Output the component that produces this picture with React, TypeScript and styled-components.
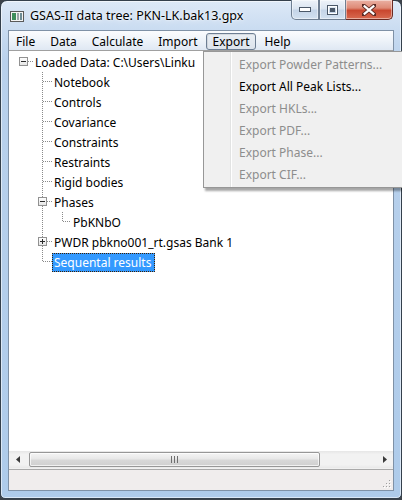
import React from 'react';
import styled, { createGlobalStyle } from 'styled-components';

const Global = createGlobalStyle`
  html, body { margin: 0; padding: 0; background: #3d434a; }
  body { width: 402px; height: 500px; overflow: hidden; font-family: "Segoe UI", "Noto Sans", "DejaVu Sans", sans-serif; }
`;

const Window = styled.div`
  position: relative;
  width: 402px;
  height: 499px;
  box-sizing: border-box;
  border: 1px solid #34404c;
  border-radius: 7px 7px 5px 5px;
  background: linear-gradient(180deg, #dde9f7 0px, #cadcf1 28px, #b9d1ec 60px, #aecbea 100%);
  box-shadow: inset 0 0 0 1px rgba(255, 255, 255, 0.55);
  display: flex;
  flex-direction: column;
`;

const TitleBar = styled.div`
  height: 29px;
  display: flex;
  align-items: center;
  flex: none;
`;

const AppIcon = styled.svg`
  margin-left: 9px;
  margin-top: 1px;
  flex: none;
`;

const Title = styled.span`
  margin-left: 6px;
  font-size: 12.5px;
  color: #000;
  text-shadow: 0 0 6px rgba(255, 255, 255, 0.9), 0 0 2px #fff;
`;

const Caption = styled.div`
  margin-left: auto;
  margin-right: 8px;
  align-self: flex-start;
  margin-top: -1px;
  display: flex;
`;

const CapButton = styled.div<{ $w: number; $close?: boolean }>`
  width: ${p => p.$w}px;
  height: 20px;
  box-sizing: border-box;
  border: 1px solid ${p => (p.$close ? '#6b2a22' : '#6f7f92')};
  border-left-width: ${p => (p.$close ? 0 : 1)}px;
  border-top: none;
  background: ${p =>
    p.$close
      ? 'linear-gradient(180deg, #eab1a4 0%, #de8a76 42%, #c9472f 55%, #d86a50 100%)'
      : 'linear-gradient(180deg, #eef3f9 0%, #dbe5f1 45%, #c5d5e8 55%, #d3e1f0 100%)'};
  border-radius: ${p => (p.$close ? '0 0 5px 0' : '0')};
  display: flex;
  align-items: center;
  justify-content: center;
  box-shadow: inset 0 0 0 1px rgba(255, 255, 255, 0.45);
  &:first-child { border-radius: 0 0 0 5px; }
`;

const Client = styled.div`
  flex: 1;
  margin: 0 7px 7px 7px;
  border: 1px solid #7f91a6;
  background: #f0f0f0;
  display: flex;
  flex-direction: column;
  min-height: 0;
`;

const MenuBar = styled.div`
  height: 19px;
  flex: none;
  display: flex;
  gap: 1px;
  align-items: stretch;
  background: linear-gradient(180deg, #fbfcfe 0%, #eef3f9 50%, #dfe8f3 100%);
`;

const MenuItem = styled.div<{ $open?: boolean }>`
  font-size: 12px;
  line-height: 17px;
  color: #000;
  box-sizing: border-box;
  margin-top: 2px;
  height: 17px;
  border: 1px solid ${p => (p.$open ? '#6d7e93' : 'transparent')};
  border-radius: 3px;
  background: ${p => (p.$open ? 'linear-gradient(180deg, #e9eef4 0%, #dde4ec 100%)' : 'transparent')};
  box-shadow: ${p => (p.$open ? 'inset 1px 1px 0 rgba(0,0,0,0.08)' : 'none')};
  display: flex;
  align-items: center;
  padding: 0 6px;
`;

const TreeArea = styled.div`
  flex: 1;
  background: #fff;
  border-top: 1px solid #a0a0a0;
  padding-top: 1px;
  overflow: hidden;
  min-height: 0;
`;

const Row = styled.div`
  height: 20px;
  display: flex;
  align-items: center;
`;

const Gutter = styled.svg`
  flex: none;
  display: block;
`;

const Label = styled.span<{ $sel?: boolean }>`
  font-size: 12px;
  line-height: 17px;
  height: 19px;
  box-sizing: border-box;
  padding: 0 3px 0 1px;
  white-space: nowrap;
  border: 1px dotted ${p => (p.$sel ? '#402000' : 'transparent')};
  background: ${p => (p.$sel ? '#3399ff' : 'transparent')};
  color: ${p => (p.$sel ? '#fff' : '#000')};
`;

const HScroll = styled.div`
  height: 17px;
  flex: none;
  display: flex;
  align-items: stretch;
  background: linear-gradient(180deg, #e6e6e6 0%, #f2f2f2 20%, #f2f2f2 80%, #e9e9e9 100%);
`;

const ArrowBtn = styled.div`
  width: 17px;
  flex: none;
  display: flex;
  align-items: center;
  justify-content: center;
`;

const Thumb = styled.div`
  margin: 1px 0 0 3px;
  height: 15px;
  width: 291px;
  box-sizing: border-box;
  border: 1px solid #979797;
  border-radius: 2px;
  background: linear-gradient(180deg, #f5f5f5 0%, #e8e8e8 45%, #d8d8d8 55%, #cfcfcf 100%);
  box-shadow: inset 0 0 0 1px rgba(255, 255, 255, 0.7);
  display: flex;
  align-items: center;
  justify-content: center;
`;

const Track = styled.div`
  flex: 1;
`;

const StatusBar = styled.div`
  margin-top: 1px;
  height: 21px;
  flex: none;
  box-sizing: border-box;
  border-top: 1px solid #a9a9a9;
  background: #f0eded;
  display: flex;
  justify-content: flex-end;
  align-items: flex-end;
  padding: 0 1px 1px 0;
`;

const Dropdown = styled.div`
  position: absolute;
  left: 202px;
  top: 50px;
  width: 200px;
  box-sizing: border-box;
  border: 1px solid #979797;
  padding: 2px 2px 1px 2px;
  background:
    linear-gradient(90deg, transparent 26px, #e2e3e3 26px, #e2e3e3 27px, #ffffff 27px, #ffffff 28px, transparent 28px),
    #f0f0f0;
  box-shadow: 2px 3px 2px rgba(0, 0, 0, 0.35);
`;

const DropItem = styled.div<{ $disabled?: boolean }>`
  height: 22px;
  line-height: 22px;
  padding-left: 33px;
  font-size: 12px;
  white-space: nowrap;
  color: ${p => (p.$disabled ? '#8d8d8d' : '#000')};
`;

type TreeRow = { label: string; level: 0 | 1 | 2; box?: 'minus' | 'plus'; last?: boolean; selected?: boolean };

const rows: TreeRow[] = [
  { label: 'Loaded Data: C:\\Users\\Linku', level: 0, box: 'minus' },
  { label: 'Notebook', level: 1 },
  { label: 'Controls', level: 1 },
  { label: 'Covariance', level: 1 },
  { label: 'Constraints', level: 1 },
  { label: 'Restraints', level: 1 },
  { label: 'Rigid bodies', level: 1 },
  { label: 'Phases', level: 1, box: 'minus' },
  { label: 'PbKNbO', level: 2, last: true },
  { label: 'PWDR pbkno001_rt.gsas Bank 1', level: 1, box: 'plus' },
  { label: 'Sequental results', level: 1, last: true, selected: true },
];

const DOT = '#8a8a8a';

const VLine = ({ x, y1, y2 }: { x: number; y1: number; y2: number }) => (
  <line x1={x + 0.5} x2={x + 0.5} y1={y1} y2={y2} stroke={DOT} strokeDasharray="1 1" shapeRendering="crispEdges" />
);
const HLine = ({ x1, x2, y }: { x1: number; x2: number; y: number }) => (
  <line x1={x1} x2={x2} y1={y + 0.5} y2={y + 0.5} stroke={DOT} strokeDasharray="1 1" shapeRendering="crispEdges" />
);
const ExpandBox = ({ cx, kind }: { cx: number; kind: 'minus' | 'plus' }) => (
  <g shapeRendering="crispEdges">
    <rect x={cx - 4 + 0.5} y={5.5} width={8} height={8} fill="url(#boxfill)" stroke="#919191" />
    <line x1={cx - 2} x2={cx + 3} y1={9.5} y2={9.5} stroke="#2b2b2b" />
    {kind === 'plus' && <line x1={cx + 0.5} x2={cx + 0.5} y1={7} y2={12} stroke="#2b2b2b" />}
  </g>
);

const Connector = ({ row }: { row: TreeRow }) => {
  const widths = { 0: 24, 1: 43, 2: 62 } as const;
  const w = widths[row.level];
  return (
    <Gutter width={w} height={20} viewBox={`0 0 ${w} 20`}>
      <defs>
        <linearGradient id="boxfill" x1="0" y1="0" x2="0" y2="1">
          <stop offset="0" stopColor="#ffffff" />
          <stop offset="1" stopColor="#e4e4e4" />
        </linearGradient>
      </defs>
      {row.level === 0 && (
        <>
          <ExpandBox cx={14} kind={row.box || 'minus'} />
          <HLine x1={19} x2={24} y={9} />
        </>
      )}
      {row.level === 1 && (
        <>
          {row.box ? (
            <>
              <VLine x={33} y1={0} y2={5} />
              {!row.last && <VLine x={33} y1={14} y2={20} />}
              <ExpandBox cx={33} kind={row.box} />
              <HLine x1={38} x2={43} y={9} />
            </>
          ) : (
            <>
              <VLine x={33} y1={0} y2={row.last ? 10 : 20} />
              <HLine x1={34} x2={43} y={9} />
            </>
          )}
        </>
      )}
      {row.level === 2 && (
        <>
          <VLine x={33} y1={0} y2={20} />
          <VLine x={53} y1={0} y2={10} />
          <HLine x1={54} x2={62} y={9} />
        </>
      )}
    </Gutter>
  );
};

const menus = ['File', 'Data', 'Calculate', 'Import', 'Export', 'Help'];
const exportItems: { label: string; disabled?: boolean }[] = [
  { label: 'Export Powder Patterns...', disabled: true },
  { label: 'Export All Peak Lists...' },
  { label: 'Export HKLs...', disabled: true },
  { label: 'Export PDF...', disabled: true },
  { label: 'Export Phase...', disabled: true },
  { label: 'Export CIF...', disabled: true },
];

export default function App() {
  return (
    <>
      <Global />
      <Window>
        <TitleBar>
          <AppIcon width="14" height="11" viewBox="0 0 14 11">
            <rect x="0.5" y="0.5" width="13" height="10" fill="#f4f4f4" stroke="#5a5a5a" />
            <rect x="2" y="2" width="4" height="7" fill="#3f8f5c" />
            <rect x="7" y="2" width="2" height="7" fill="#9aa6a8" />
            <rect x="10" y="2" width="2" height="7" fill="#6d8c95" />
          </AppIcon>
          <Title>GSAS-II data tree: PKN-LK.bak13.gpx</Title>
          <Caption>
            <CapButton $w={28}>
              <svg width="12" height="5" viewBox="0 0 12 5">
                <rect x="0.5" y="0.5" width="11" height="4" fill="#fff" stroke="#4b5868" />
              </svg>
            </CapButton>
            <CapButton $w={27}>
              <svg width="11" height="10" viewBox="0 0 11 10">
                <rect x="0.5" y="0.5" width="10" height="9" fill="none" stroke="#4b5868" />
                <rect x="1.5" y="1.5" width="8" height="7" fill="none" stroke="#fff" />
                <rect x="3.5" y="3.5" width="4" height="3" fill="#4b5868" stroke="#4b5868" />
              </svg>
            </CapButton>
            <CapButton $w={47} $close>
              <svg width="14" height="12" viewBox="0 0 14 12">
                <path d="M1 1 L13 11 M13 1 L1 11" stroke="#5a2a24" strokeWidth="4" strokeLinecap="square" />
                <path d="M1.8 1.6 L12.2 10.4 M12.2 1.6 L1.8 10.4" stroke="#fff" strokeWidth="2.2" />
              </svg>
            </CapButton>
          </Caption>
        </TitleBar>
        <Client>
          <MenuBar>
            {menus.map(m => (
              <MenuItem key={m} $open={m === 'Export'}>{m}</MenuItem>
            ))}
          </MenuBar>
          <TreeArea>
            {rows.map(r => (
              <Row key={r.label}>
                <Connector row={r} />
                <Label $sel={r.selected}>{r.label}</Label>
              </Row>
            ))}
          </TreeArea>
          <HScroll>
            <ArrowBtn>
              <svg width="4" height="7" viewBox="0 0 4 7"><path d="M4 0 L0 3.5 L4 7 Z" fill="#3a3a3a" /></svg>
            </ArrowBtn>
            <Thumb>
              <svg width="7" height="7" viewBox="0 0 7 7" shapeRendering="crispEdges">
                <path d="M0.5 0 V7 M3.5 0 V7 M6.5 0 V7" stroke="#6e6e6e" />
              </svg>
            </Thumb>
            <Track />
            <ArrowBtn>
              <svg width="4" height="7" viewBox="0 0 4 7"><path d="M0 0 L4 3.5 L0 7 Z" fill="#3a3a3a" /></svg>
            </ArrowBtn>
          </HScroll>
          <StatusBar>
            <svg width="9" height="9" viewBox="0 0 9 9" shapeRendering="crispEdges">
              {[[7, 1], [4, 4], [7, 4], [1, 7], [4, 7], [7, 7]].map(([x, y]) => (
                <g key={`${x}-${y}`}>
                  <rect x={x} y={y} width="1" height="1" fill="#fff" />
                  <rect x={x - 1} y={y - 1} width="1" height="1" fill="#a0a0a0" />
                </g>
              ))}
            </svg>
          </StatusBar>
        </Client>
        <Dropdown>
          {exportItems.map(it => (
            <DropItem key={it.label} $disabled={it.disabled}>{it.label}</DropItem>
          ))}
        </Dropdown>
      </Window>
    </>
  );
}
